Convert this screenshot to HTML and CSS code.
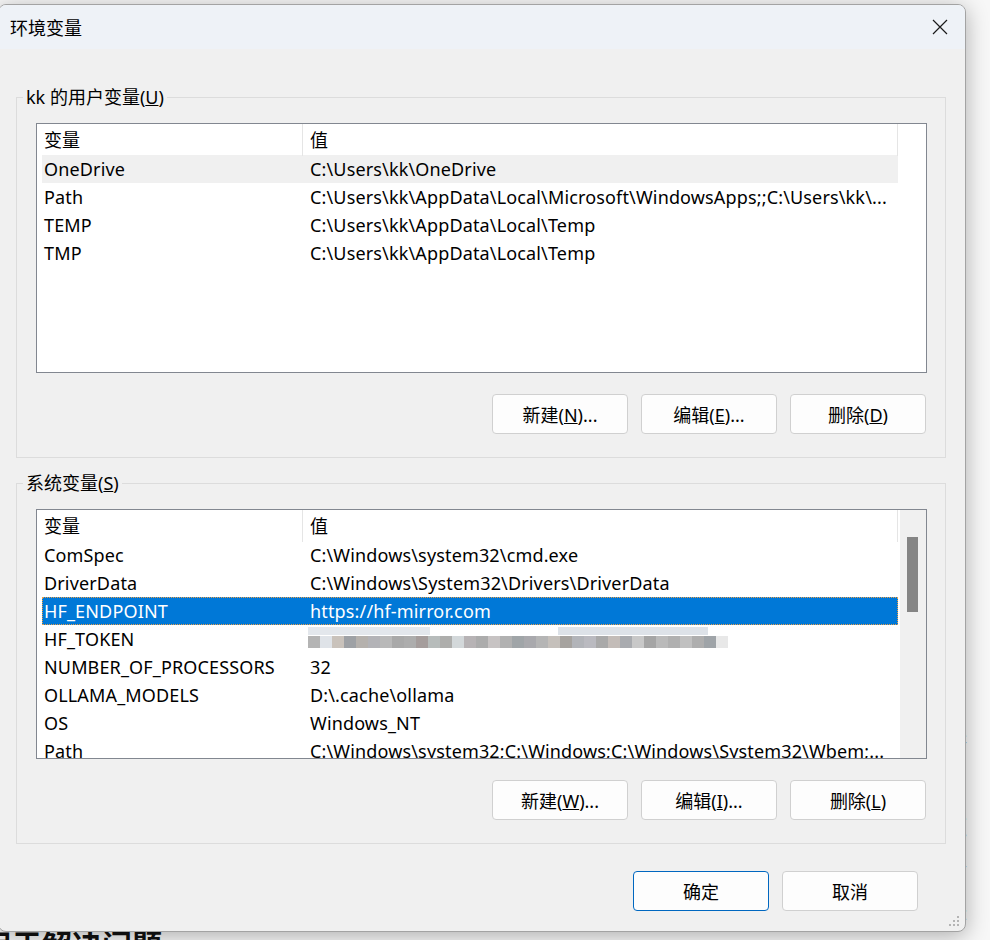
FILE: index.html
```html
<!DOCTYPE html>
<html lang="zh-CN">
<head>
  <meta charset="UTF-8" />
  <title>环境变量</title>
  <link rel="stylesheet" href="styles.css">
</head>
<body>
  <div class="desktop">
    <div class="page-text side">举例<br>这个<br>来自</div>
    <div class="page-text bottom">用于解决问题</div>

    <div class="dialog">
      <div class="titlebar">
        <span class="title">环境变量</span>
        <span class="close">
          <svg width="16" height="16" viewBox="0 0 16 16"><path d="M1 1 L15 15 M15 1 L1 15" stroke="#1a1a1a" stroke-width="1.2" fill="none"/></svg>
        </span>
      </div>

      <fieldset class="group first">
        <legend>kk 的用户变量(<u>U</u>)</legend>
        <div class="list">
          <div class="list-main">
            <div class="list-head"><span>变量</span><span>值</span></div>
            <div class="row hover"><span>OneDrive</span><span>C:\Users\kk\OneDrive</span></div>
            <div class="row"><span>Path</span><span>C:\Users\kk\AppData\Local\Microsoft\WindowsApps;;C:\Users\kk\...</span></div>
            <div class="row"><span>TEMP</span><span>C:\Users\kk\AppData\Local\Temp</span></div>
            <div class="row"><span>TMP</span><span>C:\Users\kk\AppData\Local\Temp</span></div>
          </div>
        </div>
        <div class="actions">
          <button>新建(<u>N</u>)...</button>
          <button>编辑(<u>E</u>)...</button>
          <button>删除(<u>D</u>)</button>
        </div>
      </fieldset>

      <fieldset class="group">
        <legend>系统变量(<u>S</u>)</legend>
        <div class="list">
          <div class="list-main">
            <div class="list-head"><span>变量</span><span>值</span></div>
            <div class="row"><span>ComSpec</span><span>C:\Windows\system32\cmd.exe</span></div>
            <div class="row"><span>DriverData</span><span>C:\Windows\System32\Drivers\DriverData</span></div>
            <div class="row selected"><span>HF_ENDPOINT</span><span>https://hf-mirror.com</span></div>
            <div class="row"><span>HF_TOKEN</span><span><i class="mosaic"></i></span></div>
            <div class="row"><span>NUMBER_OF_PROCESSORS</span><span>32</span></div>
            <div class="row"><span>OLLAMA_MODELS</span><span>D:\.cache\ollama</span></div>
            <div class="row"><span>OS</span><span>Windows_NT</span></div>
            <div class="row"><span>Path</span><span>C:\Windows\system32;C:\Windows;C:\Windows\System32\Wbem;...</span></div>
          </div>
          <div class="scrollbar"><div class="thumb"></div></div>
        </div>
        <div class="actions">
          <button>新建(<u>W</u>)...</button>
          <button>编辑(<u>I</u>)...</button>
          <button>删除(<u>L</u>)</button>
        </div>
      </fieldset>

      <div class="footer">
        <button class="default">确定</button>
        <button>取消</button>
      </div>

      <svg class="grip" width="12" height="12" viewBox="0 0 12 12">
        <rect x="8" y="0" width="2" height="2" fill="#b4b4b4"/>
        <rect x="4" y="4" width="2" height="2" fill="#b4b4b4"/>
        <rect x="8" y="4" width="2" height="2" fill="#b4b4b4"/>
        <rect x="0" y="8" width="2" height="2" fill="#b4b4b4"/>
        <rect x="4" y="8" width="2" height="2" fill="#b4b4b4"/>
        <rect x="8" y="8" width="2" height="2" fill="#b4b4b4"/>
      </svg>
    </div>
  </div>
</body>
</html>
```

FILE: styles.css
```css
body {
  margin: 0;
  font-family: "Noto Sans", "Noto Sans CJK SC", sans-serif;
  background: #f7f7f7;
}

.desktop {
  position: relative;
  width: 990px;
  height: 940px;
  overflow: hidden;
  background: #f7f7f7;
}

.page-text {
  position: absolute;
  color: #2b2b2b;
  font-family: "Noto Sans CJK SC", sans-serif;
}

.page-text.side {
  left: 943px;
  top: 720px;
  font-size: 24px;
  line-height: 42px;
}

.page-text.bottom {
  left: -18px;
  top: 928px;
  font-size: 30px;
  font-weight: bold;
  line-height: 1;
  color: #111;
}

.dialog {
  position: absolute;
  left: -2px;
  top: 4px;
  width: 968px;
  height: 928px;
  box-sizing: border-box;
  border: 1px solid #a3a3a3;
  border-radius: 8px;
  background: #f0f0f0;
  box-shadow: 0 4px 22px rgba(0, 0, 0, 0.3);
  overflow: hidden;
  font-size: 18px;
  color: #000;
}

.titlebar {
  height: 44px;
  background: #eef2f7;
  display: flex;
  align-items: center;
  justify-content: space-between;
  padding-left: 11px;
}

.title {
  font-size: 18px;
}

.close {
  width: 50px;
  display: flex;
  justify-content: center;
}

.group {
  margin: 37px 19px 0 17px;
  padding: 15px 18px 23px 19px;
  border: 1px solid #dcdcdc;
  min-inline-size: 0;
}

.group + .group {
  margin-top: 14px;
}

.group legend {
  margin-left: -13px;
  padding: 0 3px;
  line-height: 22px;
  font-size: 18px;
}

.list {
  height: 250px;
  box-sizing: border-box;
  border: 1px solid #828790;
  background: #fff;
  display: flex;
  overflow: hidden;
}

.list-main {
  flex: 1;
}

.list-head {
  display: grid;
  grid-template-columns: 266px 595px;
  height: 31px;
}

.list-head span {
  padding-left: 7px;
  line-height: 32px;
  border-right: 1px solid #e5e5e5;
}

.row {
  display: grid;
  grid-template-columns: 261px 595px;
  margin-left: 5px;
  width: 856px;
  height: 28px;
  line-height: 29px;
  white-space: nowrap;
  letter-spacing: 0.15px;
}

.row span {
  overflow: hidden;
}

.row span:first-child {
  padding-left: 2px;
}

.row span:last-child {
  padding-left: 7px;
}

.row.hover {
  background: #f0f0f0;
}

.row.selected {
  background: #0078d7;
  color: #fff;
  outline: 1px dotted #e9a04a;
  outline-offset: -1px;
}

.mosaic {
  display: block;
  width: 420px;
  height: 21px;
  margin: 2px 0 0 -2px;
  background:
    linear-gradient(90deg, #e3e7ec 0 122px, transparent 122px 250px, #dde2e8 250px 400px, transparent 400px) top / 100% 8px no-repeat,
    linear-gradient(90deg,
      #b4b4b4 0 12px, #dfe3e8 12px 24px, #c9c2bb 24px 36px, #9ea1a5 36px 48px,
      #b5b1ad 48px 60px, #b3b3b7 60px 72px, #b9b9b9 72px 84px, #a9a9a9 84px 96px,
      #adadad 96px 108px, #a59d9c 108px 120px, #b7bcbb 120px 132px, #aeaeac 132px 144px,
      #d3d8da 144px 156px, #b7b3b5 156px 168px, #acacac 168px 180px, #c7c3c3 180px 192px,
      #b1b1b1 192px 204px, #a0a5a8 204px 216px, #a9a9ad 216px 228px, #b5b5b5 228px 240px,
      #c5c0bb 240px 252px, #a6a39f 252px 264px, #b2b4b9 264px 276px, #babac0 276px 288px,
      #a9a9a9 288px 300px, #c3bcb8 300px 312px, #a9abaf 312px 324px, #c8c8c8 324px 336px,
      #a5a5a5 336px 348px, #bababa 348px 360px, #b0b0b0 360px 372px, #c0c0c0 372px 384px,
      #aeaeae 384px 396px, #9fa4a8 396px 408px, #e8e8e8 408px 420px) bottom / 100% 12px no-repeat;
}

.scrollbar {
  width: 26px;
  background: #f0f0f0;
  padding: 27px 0 0 7px;
  box-sizing: border-box;
}

.thumb {
  width: 11px;
  height: 75px;
  background: #858585;
}

.actions {
  display: flex;
  justify-content: flex-end;
  gap: 13px;
  margin-top: 21px;
  padding-right: 1px;
}

button {
  width: 136px;
  height: 40px;
  font-family: inherit;
  font-size: 18px;
  color: #000;
  background: #fdfdfd;
  border: 1px solid #d0d0d0;
  border-radius: 4px;
  padding: 0;
}

.footer {
  display: flex;
  justify-content: flex-end;
  gap: 13px;
  margin-top: 27px;
  padding-right: 47px;
}

button.default {
  border-color: #0067c0;
}

.grip {
  position: absolute;
  right: 4px;
  bottom: 3px;
}
```
